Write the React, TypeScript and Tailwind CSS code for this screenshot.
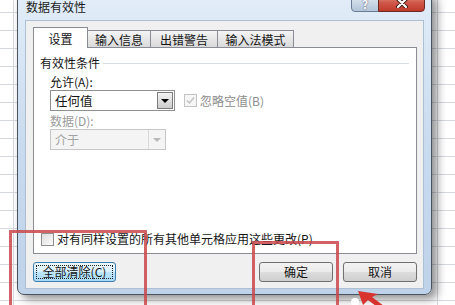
import React from "react";

function Tab({ label, selected, w }: { label: string; selected?: boolean; w: string }) {
  if (selected) {
    return (
      <div className={`relative z-10 -mb-px flex h-[21px] items-center justify-center border-x border-t border-[#898c95] bg-white pt-[2px] ${w}`}>
        {label}
      </div>
    );
  }
  return (
    <div className={`-ml-px flex h-[17px] items-center justify-center border-x border-t border-[#898c95] bg-gradient-to-b from-[#f4f4f4] to-[#dadada] pt-[2px] ${w}`}>
      {label}
    </div>
  );
}

function Button({ label, focused, w }: { label: string; focused?: boolean; w: string }) {
  if (focused) {
    return (
      <div className={`flex h-[20px] items-center justify-center rounded-[3px] border border-[#3c7fb1] bg-[linear-gradient(#eaf6fd,#d9f0fc_50%,#bee6fd_50%,#a7d9f5)] p-[2px] ${w}`}>
        <div className="flex h-full w-full items-center justify-center border border-dotted border-[#222]">{label}</div>
      </div>
    );
  }
  return (
    <div className={`flex h-[20px] items-center justify-center rounded-[3px] border border-[#707070] bg-[linear-gradient(#f2f2f2,#ebebeb_50%,#dddddd_50%,#cfcfcf)] ${w}`}>
      {label}
    </div>
  );
}

export default function App() {
  const rows = Array.from({ length: 18 });
  return (
    <div className="relative h-[305px] w-[455px] overflow-hidden bg-white font-['Noto_Sans_CJK_SC','Noto_Sans',sans-serif] text-[12px] leading-[14px] text-[#151515]">
      {/* spreadsheet grid */}
      <div className="flex flex-col">
        {rows.map((_, i) => (
          <div key={i} className={`grid grid-cols-[14px_424px_1fr] ${i === 0 ? "h-[13px]" : "h-[18px]"}`}>
            <div className="border-b border-r border-[#d5d8dd]" />
            <div className="border-b border-r border-[#d5d8dd]" />
            <div className="border-b border-[#d5d8dd]" />
          </div>
        ))}
      </div>

      {/* dialog window */}
      <div className="absolute left-[17px] top-[-8px] flex h-[303px] w-[415px] flex-col rounded-[7px] border border-[#4a5360] bg-gradient-to-b from-[#e2edf8] via-[#c9dbef] to-[#bed2e9] px-[7px] pb-[5px] shadow-[5px_4px_10px_rgba(0,0,0,0.45)]">
        {/* title bar */}
        <div className="flex h-[27px] shrink-0 items-start justify-between">
          <div className="mt-[7px] pl-px text-[12px] text-[#1b1b1b]">数据有效性</div>
          <div className="-mr-px flex">
            <div className="flex h-[19px] w-[28px] items-end justify-center rounded-bl-[4px] border border-[#6b7c92] bg-gradient-to-b from-[#e4ecf5] to-[#b3c5d9] text-[11px] leading-[13px] font-bold text-white [text-shadow:0_0_2px_#445]">
              ?
            </div>
            <div className="-ml-px flex h-[19px] w-[47px] items-center justify-center rounded-br-[4px] border border-[#6a2a24] bg-gradient-to-b from-[#e7a193] via-[#d0594b] to-[#c0392b]">
              <svg width="12" height="10" viewBox="0 0 12 10">
                <path d="M2 1 L10 9 M10 1 L2 9" stroke="#3a1a16" strokeWidth="4" strokeLinecap="round" />
                <path d="M2 1 L10 9 M10 1 L2 9" stroke="#ffffff" strokeWidth="2.2" strokeLinecap="round" />
              </svg>
            </div>
          </div>
        </div>

        {/* client area */}
        <div className="flex flex-1 flex-col border border-[#aebfd3] bg-[#f0f0f0] pb-[6px] pl-[7px] pr-[6px] pt-[6px]">
          {/* tabs */}
          <div className="flex h-[20px] shrink-0 items-end">
            <Tab label="设置" selected w="w-[55px]" />
            <Tab label="输入信息" w="w-[64px]" />
            <Tab label="出错警告" w="w-[68px]" />
            <Tab label="输入法模式" w="w-[77px]" />
          </div>

          {/* tab panel */}
          <div className="flex flex-1 flex-col border border-[#898c95] bg-white pb-[7px] pl-[6px] pr-[7px]">
            <div className="mt-[8px] flex items-center gap-[3px]">
              <span>有效性条件</span>
              <div className="h-px flex-1 bg-[#d5dfe5]" />
            </div>

            <div className="ml-[10px] mt-[5px]">允许(A):</div>

            <div className="ml-[10px] mt-px flex items-center">
              <div className="flex h-[21px] w-[125px] items-center justify-between border border-[#8e8f8f] bg-white">
                <span className="pl-[4px] text-[12.5px]">任何值</span>
                <div className="m-px flex h-[17px] w-[16px] items-center justify-center border border-[#7b7b7b] bg-gradient-to-b from-[#f3f3f3] to-[#cdcdcd]">
                  <div className="h-0 w-0 border-x-[4px] border-t-[4px] border-x-transparent border-t-black" />
                </div>
              </div>
              <div className="ml-[9px] flex h-[13px] w-[13px] items-center justify-center border border-[#c4c4c4] bg-[#f6f6f6]">
                <svg width="9" height="9" viewBox="0 0 9 9">
                  <path d="M1 4.5 L3.5 7 L8 1.5" stroke="#c2c2c2" strokeWidth="1.5" fill="none" />
                </svg>
              </div>
              <span className="ml-[3px] text-[#8d8d8d]">忽略空值(B)</span>
            </div>

            <div className="ml-[10px] mt-[3px] text-[#9a9a9a]">数据(D):</div>

            <div className="ml-[10px] mt-px flex h-[21px] w-[116px] items-center justify-between border border-[#c6c6c6] bg-[#f4f4f4]">
              <span className="pl-[4px] text-[#a2a2a2]">介于</span>
              <div className="flex h-full w-[17px] items-center justify-center border-l border-[#dadada]">
                <div className="h-0 w-0 border-x-[4px] border-t-[4px] border-x-transparent border-t-[#b9b9b9]" />
              </div>
            </div>

            <div className="flex-1" />

            <div className="ml-px flex h-[14px] items-center">
              <div className="h-[13px] w-[13px] border border-[#8f8f8f] bg-gradient-to-br from-[#dedede] to-[#fbfbfb]" />
              <span className="ml-[3px]">对有同样设置的所有其他单元格应用这些更改(P)</span>
            </div>
          </div>

          {/* buttons */}
          <div className="mt-[8px] flex h-[20px] shrink-0 items-center">
            <Button label="全部清除(C)" focused w="w-[83px]" />
            <div className="flex-1" />
            <Button label="确定" w="w-[74px]" />
            <div className="w-[10px]" />
            <Button label="取消" w="w-[74px]" />
          </div>
        </div>
      </div>

      {/* annotations */}
      <div className="absolute left-[9px] top-[230px] h-[100px] w-[138px] border-[3px] border-[#c9484b]/85" />
      <div className="absolute left-[252px] top-[241px] h-[90px] w-[87px] border-[3px] border-[#c9484b]/85" />
      <svg className="absolute left-[348px] top-[286px]" width="45" height="20" viewBox="0 0 45 20">
        <circle cx="7" cy="16" r="4" fill="#ffffff" />
        <path d="M10 5 L30 8 L24 11 L36 20 L28 20 L20 14 L15 19 Z" fill="#d8332f" />
      </svg>
    </div>
  );
}
